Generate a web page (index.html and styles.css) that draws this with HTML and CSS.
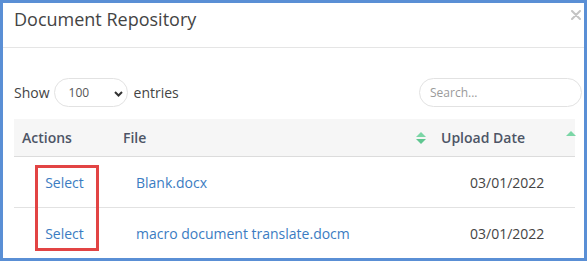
FILE: index.html
```html
<!DOCTYPE html>
<html lang="en">
<head>
  <meta charset="UTF-8">
  <title>Document Repository</title>
  <link rel="stylesheet" href="styles.css">
</head>
<body>

  <div class="modal">
    <div class="modal-header">
      <h2 class="modal-title">Document Repository</h2>
      <button class="close" aria-label="Close">
        <svg width="10" height="10" viewBox="0 0 10 10">
          <path d="M1 1L9 9M9 1L1 9" stroke="#c4c4c4" stroke-width="2" stroke-linecap="round"/>
        </svg>
      </button>
    </div>

    <div class="modal-body">
      <div class="dt-controls">
        <label class="dt-length">
          Show
          <span class="select-wrap">
            <select>
              <option>10</option>
              <option>25</option>
              <option>50</option>
              <option selected>100</option>
            </select>
            <svg class="chevron" width="9" height="6" viewBox="0 0 9 6">
              <path d="M1 1L4.5 4.5L8 1" stroke="#333" stroke-width="2" fill="none"/>
            </svg>
          </span>
          entries
        </label>
        <input class="dt-search" type="search" placeholder="Search...">
      </div>

      <table class="dt">
        <colgroup>
          <col class="col-actions">
          <col class="col-file">
          <col class="col-date">
        </colgroup>
        <thead>
          <tr>
            <th>Actions</th>
            <th class="sortable">
              <div class="th-inner">
                <span>File</span>
                <svg class="sort-icon" width="10" height="12" viewBox="0 0 10 12">
                  <path d="M5 0L10 5H0Z" fill="#7bd6a6"/>
                  <path d="M5 12L10 7H0Z" fill="#5fc690"/>
                </svg>
              </div>
            </th>
            <th class="sortable date-th">
              <div class="th-inner">
                <span>Upload Date</span>
                <svg class="sort-icon asc" width="10" height="5" viewBox="0 0 10 5">
                  <path d="M5 0L10 5H0Z" fill="#7bd6a6"/>
                </svg>
              </div>
            </th>
          </tr>
        </thead>
        <tbody>
          <tr>
            <td class="cell-action"><a href="#">Select</a></td>
            <td class="cell-file"><a href="#">Blank.docx</a></td>
            <td class="cell-date">03/01/2022</td>
          </tr>
          <tr>
            <td class="cell-action"><a href="#">Select</a></td>
            <td class="cell-file"><a href="#">macro document translate.docm</a></td>
            <td class="cell-date">03/01/2022</td>
          </tr>
        </tbody>
      </table>
    </div>

    <div class="highlight"></div>
  </div>

</body>
</html>
```

FILE: styles.css
```css
body {
  margin: 0;
  font-family: "Open Sans", "Liberation Sans", sans-serif;
  background: #fff;
}
.modal {
  position: relative;
  box-sizing: border-box;
  width: 587px;
  height: 261px;
  overflow: hidden;
  border: 3px solid #5a8fd5;
  background: #fff;
}
.modal-header {
  display: flex;
  justify-content: space-between;
  align-items: flex-start;
  box-sizing: border-box;
  height: 45px;
  padding: 4px 3px 0 11px;
  border-bottom: 1px solid #e5e5e5;
}
.modal-title {
  margin: 0;
  font-size: 18px;
  font-weight: 400;
  line-height: 24px;
  color: #444;
}
.close {
  margin-top: 3px;
  padding: 0;
  border: 0;
  background: none;
  line-height: 0;
}
.modal-body {
  padding: 30px 2px 0 11px;
}
.dt-controls {
  display: flex;
  justify-content: space-between;
  align-items: center;
  height: 29px;
}
.dt-length {
  display: flex;
  align-items: center;
  font-size: 14px;
  color: #444;
}
.select-wrap {
  position: relative;
  margin: 0 6px 0 4px;
}
.select-wrap select {
  appearance: none;
  box-sizing: border-box;
  width: 74px;
  height: 29px;
  padding: 0 0 0 14px;
  border: 1px solid #e2e2e2;
  border-radius: 15px;
  background: #fff;
  font-family: inherit;
  font-size: 12px;
  color: #555;
}
.chevron {
  position: absolute;
  left: 60px;
  top: 13px;
}
.dt-search {
  box-sizing: border-box;
  width: 163px;
  height: 29px;
  padding: 0 10px;
  border: 1px solid #e2e2e2;
  border-radius: 15px;
  font-family: inherit;
  font-size: 12px;
  color: #555;
}
.dt-search::placeholder {
  color: #9a9a9a;
}
.dt {
  width: 561px;
  margin-top: 12px;
  border-collapse: collapse;
  table-layout: fixed;
  font-size: 14px;
}
.col-actions { width: 101px; }
.col-file { width: 318px; }
.col-date { width: 142px; }
.dt th {
  height: 37px;
  padding: 0 0 0 8px;
  background: #f6f6f6;
  border-bottom: 1px solid #dcdcdc;
  text-align: left;
  font-weight: 600;
  color: #4d5566;
}
.th-inner {
  display: flex;
  justify-content: space-between;
  align-items: center;
  padding-right: 7px;
}
.date-th .th-inner {
  padding-right: 0;
}
.sort-icon.asc {
  margin-top: -8px;
  margin-right: -1px;
}
.dt td {
  height: 50px;
  padding: 0;
  border-bottom: 1px solid #e2e2e2;
  color: #444;
}
.dt a {
  color: #3b7cc2;
  text-decoration: none;
}
.cell-action { text-align: center; }
.cell-file { padding-left: 21px !important; }
.cell-date { padding-left: 37px !important; }
.highlight {
  position: absolute;
  left: 32px;
  top: 162px;
  width: 58px;
  height: 80px;
  border: 3px solid #e24444;
}
```
